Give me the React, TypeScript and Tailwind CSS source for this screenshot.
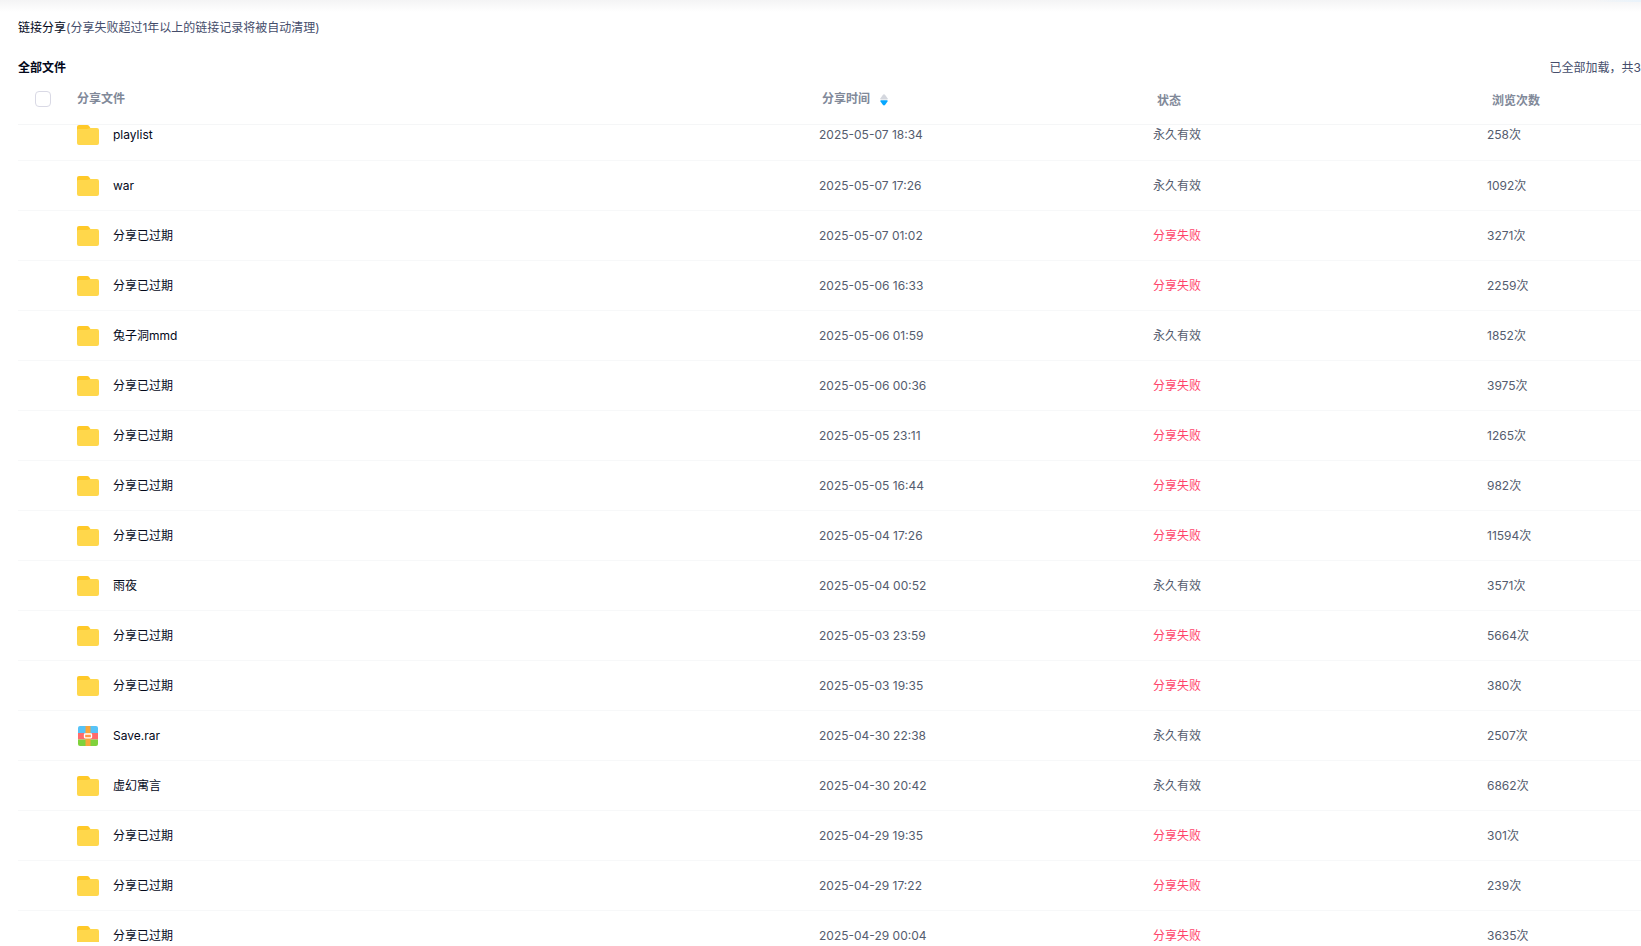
type Share = {
  name: string;
  time: string;
  views: number;
  failed?: boolean;
  archive?: boolean;
};

const EXPIRED = "分享已过期";

const shares: Share[] = [
  { name: "playlist", time: "2025-05-07 18:34", views: 258 },
  { name: "war", time: "2025-05-07 17:26", views: 1092 },
  { name: EXPIRED, time: "2025-05-07 01:02", views: 3271, failed: true },
  { name: EXPIRED, time: "2025-05-06 16:33", views: 2259, failed: true },
  { name: "兔子洞mmd", time: "2025-05-06 01:59", views: 1852 },
  { name: EXPIRED, time: "2025-05-06 00:36", views: 3975, failed: true },
  { name: EXPIRED, time: "2025-05-05 23:11", views: 1265, failed: true },
  { name: EXPIRED, time: "2025-05-05 16:44", views: 982, failed: true },
  { name: EXPIRED, time: "2025-05-04 17:26", views: 11594, failed: true },
  { name: "雨夜", time: "2025-05-04 00:52", views: 3571 },
  { name: EXPIRED, time: "2025-05-03 23:59", views: 5664, failed: true },
  { name: EXPIRED, time: "2025-05-03 19:35", views: 380, failed: true },
  { name: "Save.rar", time: "2025-04-30 22:38", views: 2507, archive: true },
  { name: "虚幻寓言", time: "2025-04-30 20:42", views: 6862 },
  { name: EXPIRED, time: "2025-04-29 19:35", views: 301, failed: true },
  { name: EXPIRED, time: "2025-04-29 17:22", views: 239, failed: true },
  { name: EXPIRED, time: "2025-04-29 00:04", views: 3635, failed: true },
];

function FolderIcon() {
  return (
    <svg width="24" height="24" viewBox="0 0 24 24" aria-hidden="true" className="shrink-0">
      <path d="M1 4a2 2 0 0 1 2-2h8.2c.8 0 1.400.3 1.900.9L15 6v6H1z" fill="#ffc928" />
      <path d="M1 7.500C1 6.500 1.500 6 2.500 6H11c.7 0 1.200-.2 1.700-.5.500-.3 1-.5 1.700-.5H21a2 2 0 0 1 2 2v13a2 2 0 0 1-2 2H3a2 2 0 0 1-2-2z" fill="#ffd74b" />
    </svg>
  );
}

function ArchiveIcon() {
  return (
    <svg width="24" height="24" viewBox="0 0 24 24" aria-hidden="true" className="shrink-0">
      <path d="M2 9V4a2 2 0 0 1 2-2h16a2 2 0 0 1 2 2v5z" fill="#57c3f7" />
      <path d="M2 9h20v6.500H2z" fill="#ff6b6b" />
      <path d="M2 15.500h20V20a2 2 0 0 1-2 2H4a2 2 0 0 1-2-2z" fill="#7fd13b" />
      <path d="M9.500 2h5v20h-5z" fill="#f9a63a" />
      <rect x="8.500" y="10" width="7" height="3.800" rx=".5" fill="#ff9a4a" stroke="#fff" strokeWidth="1.300" />
    </svg>
  );
}

function SortIcon() {
  return (
    <svg width="8" height="12" viewBox="0 0 8 12" aria-hidden="true">
      <path d="M.5 5.500V4.300L2.800 1.100Q4-.4 5.200 1.100L7.500 4.300v1.200z" fill="#d4d7de" />
      <path d="M.5 6.300v1.300l2.300 3.200q1.200 1.500 2.400 0l2.300-3.200V6.300z" fill="#06a7ff" />
    </svg>
  );
}

const rowGrid = "grid grid-cols-[801fr_334fr_334fr_154fr]";

export default function App() {
  return (
    <main className="flex h-screen flex-col overflow-hidden bg-white pb-1 font-['Inter','Noto_Sans_CJK_SC',sans-serif] text-xs text-[#545c6e]">
      <div className="flex h-3 shrink-0 bg-linear-to-b from-[#f4f4f5] to-white">
        <div className="ml-auto h-0.5 w-12 bg-linear-to-r from-transparent to-[#e9f3fb]" />
      </div>
      <header className="pl-[18px]">
        <p className="flex h-8 items-center text-[#454d6b]">
          <span className="text-[#03081a]">链接分享</span>(分享失败超过1年以上的链接记录将被自动清理)
        </p>
        <div className="flex h-[47px] items-center justify-between">
          <h1 className="font-bold text-[#03081a]">全部文件</h1>
          <span className="whitespace-nowrap text-[#454d6b]">已全部加载，共3</span>
        </div>
      </header>
      <table className="flex min-h-0 flex-1 flex-col pl-[18px]">
        <thead className="block shrink-0">
          <tr className={`${rowGrid} h-[34px] border-b border-[#f5f6f7] text-left text-[#818999]`}>
            <th className="flex items-start font-bold">
              <input
                type="checkbox"
                aria-label="全选"
                className="ml-[17px] size-4 appearance-none rounded border border-[#d9d9e5] bg-white checked:bg-[#06a7ff]"
              />
              <span className="ml-[26px]">分享文件</span>
            </th>
            <th className="pl-[3px] font-bold">
              <button type="button" className="flex items-start gap-[10px] font-bold">
                分享时间
                <span className="pt-[3px]">
                  <SortIcon />
                </span>
              </button>
            </th>
            <th className="pt-0.5 pl-1 font-bold">状态</th>
            <th className="pt-0.5 pl-[5px] font-bold">浏览次数</th>
          </tr>
        </thead>
        <tbody className="block min-h-0 flex-1 overflow-hidden">
          {shares.map((share, index) => (
            <tr
              key={share.time}
              className={`${rowGrid} items-center border-b border-[#f7f8f9] ${index === 0 ? "-mt-4 h-[52px]" : "h-[50px]"}`}
            >
              <td className="flex items-center gap-[13px] pl-[58px] text-[#03081a]">
                {share.archive ? <ArchiveIcon /> : <FolderIcon />}
                <span>{share.name}</span>
              </td>
              <td>{share.time}</td>
              <td className={share.failed ? "text-[#ff436a]" : ""}>{share.failed ? "分享失败" : "永久有效"}</td>
              <td>{share.views}次</td>
            </tr>
          ))}
        </tbody>
      </table>
    </main>
  );
}
